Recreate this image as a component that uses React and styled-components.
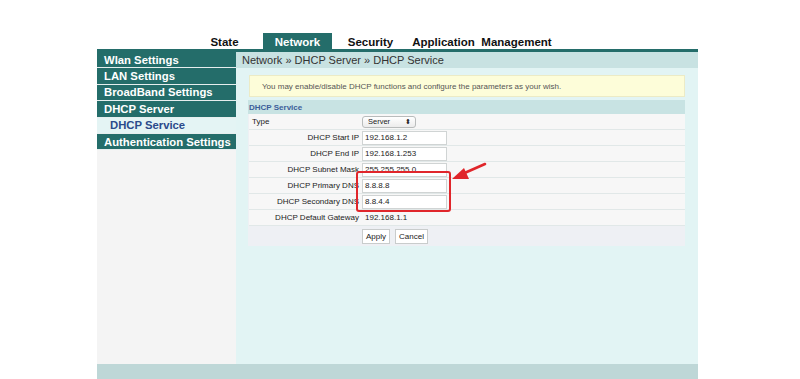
import React from 'react';
import styled, { createGlobalStyle } from 'styled-components';

const GlobalStyle = createGlobalStyle`
  html, body {
    margin: 0;
    padding: 0;
    background: #ffffff;
    font-family: "Liberation Sans", Arial, sans-serif;
  }
`;

const teal = '#246d6a';

const Page = styled.div`
  width: 601px;
  margin-left: 97px;
  display: flex;
  flex-direction: column;
`;

const Header = styled.div`
  height: 49px;
  display: flex;
  align-items: flex-end;
  padding-left: 91px;
  border-bottom: 3px solid ${teal};
`;

const Tab = styled.div`
  width: 69px;
  height: 16px;
  margin: 0 2px;
  padding-top: 2px;
  box-sizing: border-box;
  display: flex;
  align-items: center;
  justify-content: center;
  font-size: 11.5px;
  font-weight: bold;
  white-space: nowrap;
  color: ${({ $active }) => ($active ? '#ffffff' : '#111111')};
  background: ${({ $active }) => ($active ? teal : 'transparent')};
`;

const Body = styled.div`
  display: flex;
  height: 312px;
`;

const Sidebar = styled.div`
  width: 139px;
  background: #f4f4f4;
  display: flex;
  flex-direction: column;
`;

const MenuItem = styled.div`
  height: 15.4px;
  display: flex;
  align-items: center;
  padding-left: ${({ $sub }) => ($sub ? '13px' : '7px')};
  font-size: 11.3px;
  font-weight: bold;
  white-space: nowrap;
  color: ${({ $sub }) => ($sub ? '#2b4a8b' : '#ffffff')};
  background: ${({ $sub }) => ($sub ? '#e4f4f4' : teal)};
  border-bottom: 1px solid #e6eeee;
`;

const Main = styled.div`
  flex: 1;
  background: #e2f4f4;
  display: flex;
  flex-direction: column;
`;

const Breadcrumb = styled.div`
  height: 16px;
  background: #c8e2e2;
  display: flex;
  align-items: center;
  padding-left: 6px;
  font-size: 11px;
  color: #333333;
`;

const Content = styled.div`
  padding: 7px 13px 0 12px;
  display: flex;
  flex-direction: column;
  gap: 3px;
  position: relative;
`;

const Info = styled.div`
  height: 20px;
  margin-left: 1px;
  background: #fdfdd9;
  border: 1px solid #ecebc6;
  display: flex;
  align-items: center;
  padding-left: 12px;
  font-size: 8px;
  color: #555555;
`;

const Panel = styled.div`
  display: flex;
  flex-direction: column;
  background: #eef0f4;
`;

const PanelTitle = styled.div`
  height: 14px;
  background: #c8e3e3;
  display: flex;
  align-items: center;
  padding-left: 1px;
  font-size: 8px;
  font-weight: bold;
  color: #3b5d99;
`;

const Row = styled.div`
  height: 15px;
  display: grid;
  grid-template-columns: 112px 1fr;
  align-items: center;
  background: #f7f7f7;
  border-bottom: 1px solid #e1e8e8;
  margin-left: 1px;
`;

const Label = styled.div`
  font-size: 8px;
  color: #222222;
  white-space: nowrap;
  text-align: ${({ $left }) => ($left ? 'left' : 'right')};
  padding: ${({ $left }) => ($left ? '0 0 0 3px' : '0 2px 0 0')};
`;

const Input = styled.div`
  width: 81px;
  height: 12px;
  margin-left: 1px;
  background: ${({ $plain }) => ($plain ? 'transparent' : '#ffffff')};
  border: 1px solid ${({ $plain }) => ($plain ? 'transparent' : '#d0d4d4')};
  display: flex;
  align-items: center;
  padding-left: 2px;
  font-size: 8px;
  color: #222222;
`;

const Select = styled.div`
  width: 43px;
  height: 10px;
  margin-left: 1px;
  border: 1px solid #b9bcbc;
  border-radius: 3px;
  background: linear-gradient(#ffffff, #ececec);
  display: flex;
  align-items: center;
  justify-content: space-between;
  padding: 0 4px 0 5px;
  box-sizing: content-box;
  font-size: 7.5px;
  color: #222222;
`;

const Caret = styled.span`
  font-size: 7px;
`;

const Buttons = styled.div`
  height: 20px;
  display: flex;
  align-items: center;
  gap: 5px;
  padding-left: 114px;
`;

const Button = styled.div`
  height: 13px;
  padding: 0 3px;
  display: flex;
  align-items: center;
  background: #ffffff;
  border: 1px solid #c9cccc;
  font-size: 8px;
  color: #222222;
`;

const Highlight = styled.div`
  position: absolute;
  left: 120px;
  top: 103px;
  width: 91px;
  height: 37px;
  border: 2px solid #e0262b;
  border-radius: 3px;
`;

const Arrow = styled.svg`
  position: absolute;
  left: 212px;
  top: 94px;
`;

const Footer = styled.div`
  height: 15px;
  background: #bed7d7;
`;

const rows = [
  ['DHCP Start IP', '192.168.1.2'],
  ['DHCP End IP', '192.168.1.253'],
  ['DHCP Subnet Mask', '255.255.255.0'],
  ['DHCP Primary DNS', '8.8.8.8'],
  ['DHCP Secondary DNS', '8.8.4.4'],
];

const App = () => {
  return (
    <>
      <GlobalStyle />
      <Page>
        <Header>
          <Tab>State</Tab>
          <Tab $active>Network</Tab>
          <Tab>Security</Tab>
          <Tab>Application</Tab>
          <Tab>Management</Tab>
        </Header>
        <Body>
          <Sidebar>
            <MenuItem>Wlan Settings</MenuItem>
            <MenuItem>LAN Settings</MenuItem>
            <MenuItem>BroadBand Settings</MenuItem>
            <MenuItem>DHCP Server</MenuItem>
            <MenuItem $sub>DHCP Service</MenuItem>
            <MenuItem>Authentication Settings</MenuItem>
          </Sidebar>
          <Main>
            <Breadcrumb>Network » DHCP Server » DHCP Service</Breadcrumb>
            <Content>
              <Info>You may enable/disable DHCP functions and configure the parameters as your wish.</Info>
              <Panel>
                <PanelTitle>DHCP Service</PanelTitle>
                <Row>
                  <Label $left>Type</Label>
                  <Select>
                    <span>Server</span>
                    <Caret>⬍</Caret>
                  </Select>
                </Row>
                {rows.map(([label, value]) => (
                  <Row key={label}>
                    <Label>{label}</Label>
                    <Input>{value}</Input>
                  </Row>
                ))}
                <Row>
                  <Label>DHCP Default Gateway</Label>
                  <Input $plain>192.168.1.1</Input>
                </Row>
                <Buttons>
                  <Button>Apply</Button>
                  <Button>Cancel</Button>
                </Buttons>
              </Panel>
              <Highlight />
              <Arrow width="40" height="24" viewBox="0 0 40 24">
                <line x1="37" y1="2" x2="12" y2="13" stroke="#e0262b" strokeWidth="2.6" strokeLinecap="round" />
                <polygon points="4,17 16,6 21,17" fill="#e0262b" />
              </Arrow>
            </Content>
          </Main>
        </Body>
        <Footer />
      </Page>
    </>
  );
};

export default App;
